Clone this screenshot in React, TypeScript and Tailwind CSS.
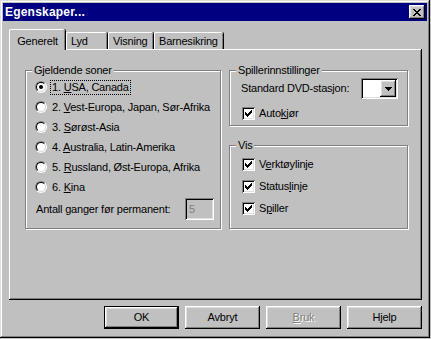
import React from 'react'

const raised =
  'shadow-[inset_-1px_-1px_#000,inset_1px_1px_#fff,inset_-2px_-2px_#808080,inset_2px_2px_#dfdfdf]'
const panelRaised =
  'shadow-[inset_-1px_-1px_#000,inset_1px_1px_#fff,inset_-2px_-2px_#808080]'
const sunken =
  'shadow-[inset_1px_1px_#808080,inset_-1px_-1px_#fff,inset_2px_2px_#000,inset_-2px_-2px_#dfdfdf]'
const etched = 'border border-[#808080] shadow-[inset_1px_1px_#fff,1px_1px_#fff]'

function Radio({ checked }: { checked?: boolean }) {
  return (
    <div className="w-[12px] h-[12px] rounded-full border border-t-[#808080] border-l-[#808080] border-b-white border-r-white shrink-0">
      <div className="w-full h-full rounded-full border border-t-black border-l-black border-b-[#dfdfdf] border-r-[#dfdfdf] bg-white flex items-center justify-center">
        {checked && <div className="w-[4px] h-[4px] rounded-full bg-black" />}
      </div>
    </div>
  )
}

function CheckBox() {
  return (
    <div className={`w-[13px] h-[13px] bg-white flex items-center justify-center shrink-0 ${sunken}`}>
      <svg width="7" height="7" viewBox="0 0 7 7" shapeRendering="crispEdges">
        {[2, 3, 4, 3, 2, 1, 0].map((y, x) => (
          <rect key={x} x={x} y={y} width="1" height="3" fill="#000" />
        ))}
      </svg>
    </div>
  )
}

function GroupLabel({ children }: { children: React.ReactNode }) {
  return (
    <span className="absolute left-[6px] top-[-8px] px-[2px] bg-[#c0c0c0] leading-[14px]">
      {children}
    </span>
  )
}

const zones = [
  { key: 'U', rest: 'SA, Canada', pre: '1. ' },
  { key: 'V', rest: 'est-Europa, Japan, Sør-Afrika', pre: '2. ' },
  { key: 'S', rest: 'ørøst-Asia', pre: '3. ' },
  { key: 'A', rest: 'ustralia, Latin-Amerika', pre: '4. ' },
  { key: 'R', rest: 'ussland, Øst-Europa, Afrika', pre: '5. ' },
  { key: 'K', rest: 'ina', pre: '6. ' }
]

const tabs = [
  { label: 'Lyd', w: 'w-[41px]' },
  { label: 'Visning', w: 'w-[45px]' },
  { label: 'Barnesikring', w: 'w-[69px]' }
]

export default function App() {
  return (
    <div className="w-[431px] h-[339px] bg-[#c0c0c0] text-[11px] tracking-[-0.2px] whitespace-nowrap text-black font-['Liberation_Sans',Arial,sans-serif]">
      <div className="w-[430px] h-[338px] p-[3px] flex flex-col shadow-[inset_-1px_-1px_#000,inset_1px_1px_#dfdfdf,inset_-2px_-2px_#808080,inset_2px_2px_#fff]">
        {/* Title bar */}
        <div className="h-[18px] bg-[#000080] flex items-center justify-between pl-[2px] pr-[2px]">
          <span className="text-white font-bold text-[12px] tracking-[0.2px]">Egenskaper...</span>
          <div className={`w-[16px] h-[14px] bg-[#c0c0c0] flex items-center justify-center ${raised}`}>
            <svg width="8" height="7" viewBox="0 0 8 7" shapeRendering="crispEdges">
              <path
                d="M0 0h2v1H0zM6 0h2v1H6zM1 1h2v1H1zM5 1h2v1H5zM2 2h4v1H2zM3 3h2v1H3zM2 4h4v1H2zM1 5h2v1H1zM5 5h2v1H5zM0 6h2v1H0zM6 6h2v1H6z"
                fill="#000"
              />
            </svg>
          </div>
        </div>

        <div className="pl-[6px] pr-[5px] pt-[8px]">
          {/* Tabs */}
          <div className="flex items-end h-[20px]">
            <div className="relative z-10 w-[56px] h-[21px] mb-[-1px] bg-[#c0c0c0] border-l border-t border-white rounded-tl-[2px] rounded-tr-[2px] shadow-[inset_-1px_0_#808080,1px_0_#000] flex items-start pt-[3px] justify-center">
              Generelt
            </div>
            {tabs.map(t => (
              <div
                key={t.label}
                className={`${t.w} h-[17px] ml-[1px] border-l border-t border-white rounded-tl-[2px] rounded-tr-[2px] shadow-[inset_-1px_0_#808080,1px_0_#000] flex items-center pl-[4px] pt-[1px]`}
              >
                {t.label}
              </div>
            ))}
          </div>

          {/* Panel */}
          <div className={`h-[251px] pl-[16px] pt-[21px] flex gap-[8px] ${panelRaised}`}>
            {/* Gjeldende soner */}
            <div className={`relative w-[196px] h-[159px] shrink-0 pl-[9px] pr-[6px] pt-[6px] ${etched}`}>
              <GroupLabel>Gjeldende soner</GroupLabel>
              {zones.map((z, i) => (
                <div key={z.key} className="h-[20px] flex items-center">
                  <Radio checked={i === 0} />
                  <span
                    className={`ml-[3px] px-[1px] leading-[13px] border ${
                      i === 0 ? 'border-dotted border-black' : 'border-transparent'
                    }`}
                  >
                    {z.pre}
                    <span className="underline underline-offset-[1px]">{z.key}</span>
                    {z.rest}
                  </span>
                </div>
              ))}
              <div className="mt-[1px] h-[22px] flex items-center">
                <span className="flex-1 pl-[1px]">Antall ganger før permanent:</span>
                <div className={`w-[29px] h-[22px] flex items-center pl-[4px] text-[#808080] ${sunken}`}>5</div>
              </div>
            </div>

            {/* Right column */}
            <div className="flex flex-col gap-[19px]">
              <div className={`relative w-[179px] h-[56px] pl-[11px] pr-[9px] pt-[7px] ${etched}`}>
                <GroupLabel>Spillerinnstillinger</GroupLabel>
                <div className="h-[21px] flex items-center justify-between">
                  <span>Standard DVD-stasjon:</span>
                  <div className={`w-[37px] h-[21px] bg-white flex justify-end p-[2px] ${sunken}`}>
                    <div className={`w-[16px] h-[17px] bg-[#c0c0c0] flex items-center justify-center ${raised}`}>
                      <svg width="7" height="4" viewBox="0 0 7 4" shapeRendering="crispEdges">
                        <path d="M0 0h7v1H0zM1 1h5v1H1zM2 2h3v1H2zM3 3h1v1H3z" fill="#000" />
                      </svg>
                    </div>
                  </div>
                </div>
                <div className="mt-[4px] h-[20px] flex items-center pl-[1px] gap-[4px]">
                  <CheckBox />
                  <span>
                    Auto<span className="underline underline-offset-[1px]">k</span>jør
                  </span>
                </div>
              </div>

              <div className={`relative w-[179px] h-[84px] pl-[12px] pt-[7px] ${etched}`}>
                <GroupLabel>Vis</GroupLabel>
                <div className="h-[22px] flex items-center gap-[4px]">
                  <CheckBox />
                  <span>
                    V<span className="underline underline-offset-[1px]">e</span>rktøylinje
                  </span>
                </div>
                <div className="h-[22px] flex items-center gap-[4px]">
                  <CheckBox />
                  <span>
                    Status<span className="underline underline-offset-[1px]">l</span>inje
                  </span>
                </div>
                <div className="h-[23px] flex items-center gap-[4px]">
                  <CheckBox />
                  <span>
                    S<span className="underline underline-offset-[1px]">p</span>iller
                  </span>
                </div>
              </div>
            </div>
          </div>

          {/* Buttons */}
          <div className="mt-[6px] flex justify-end gap-[6px]">
            <button className={`w-[75px] h-[23px] border border-black flex items-center justify-center ${raised}`}>
              OK
            </button>
            <button className={`w-[75px] h-[23px] flex items-center justify-center ${raised}`}>Avbryt</button>
            <button
              className={`w-[75px] h-[23px] flex items-center justify-center text-[#808080] [text-shadow:1px_1px_0_#fff] ${raised}`}
            >
              <span>
                <span className="underline underline-offset-[1px]">B</span>ruk
              </span>
            </button>
            <button className={`w-[75px] h-[23px] flex items-center justify-center ${raised}`}>Hjelp</button>
          </div>
        </div>
      </div>
    </div>
  )
}
